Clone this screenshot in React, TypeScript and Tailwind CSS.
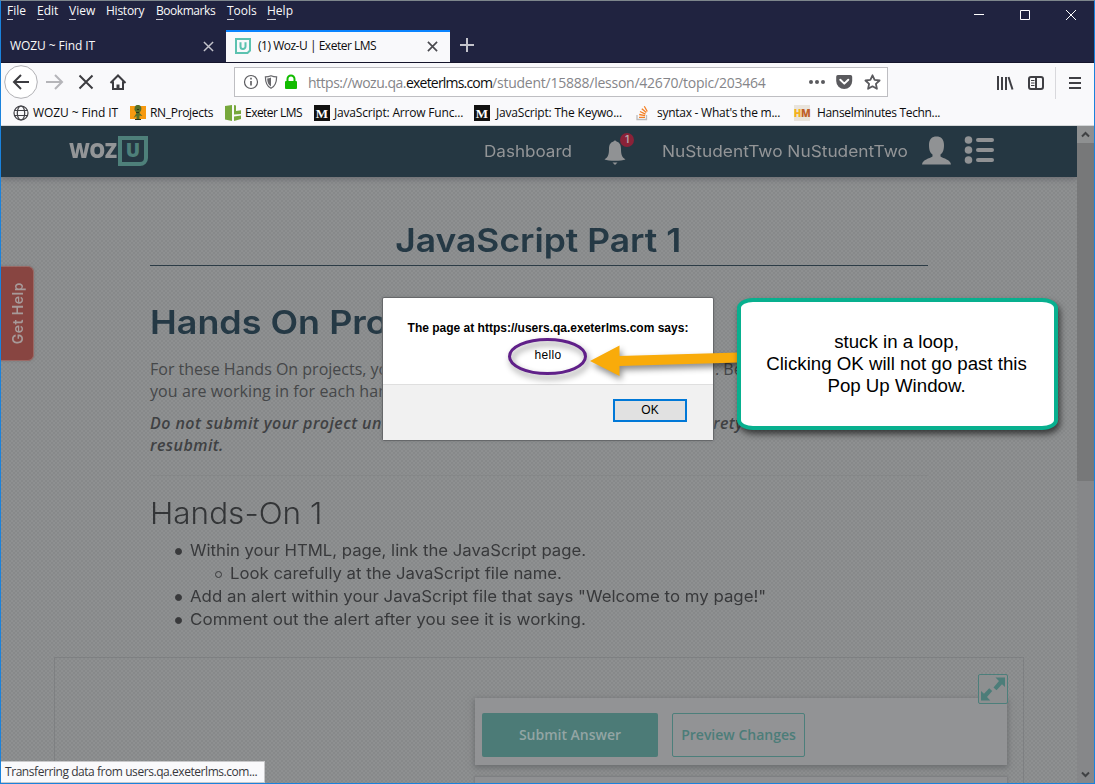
import type { ReactNode } from 'react';

const OS = "font-['Open_Sans',sans-serif]";
const ARIAL = "font-['Liberation_Sans',sans-serif]";

function MenuItem({ pre = '', k, post, cls }: { pre?: string; k: string; post: string; cls: string }) {
  return (
    <span className={`shrink-0 whitespace-nowrap ${cls}`}>
      {pre}
      <span className="border-b border-[#c9c9d2]">{k}</span>
      {post}
    </span>
  );
}

function Cross({ size, color, width = 1.5 }: { size: number; color: string; width?: number }) {
  return (
    <svg width={size} height={size} viewBox="0 0 12 12" fill="none" stroke={color} strokeWidth={width}>
      <path d="M1 1L11 11M11 1L1 11" />
    </svg>
  );
}

function Bookmark({ icon, label, cls }: { icon: ReactNode; label: string; cls: string }) {
  return (
    <div className={`flex shrink-0 items-center whitespace-nowrap ${cls}`}>
      {icon}
      <span>{label}</span>
    </div>
  );
}

function MediumIcon() {
  return (
    <span className="mr-1 flex h-4 w-4 shrink-0 items-center justify-center bg-[#111] font-['Liberation_Serif',serif] text-[13px] leading-none font-bold tracking-normal text-white">
      M
    </span>
  );
}

function MenuBar() {
  return (
    <div className="flex h-[29px] text-[12px] leading-[14px] text-[#f9f9fa]">
      <div className="flex h-[20px] items-center pl-[6px]">
        <MenuItem k="F" post="ile" cls="w-[30px]" />
        <MenuItem k="E" post="dit" cls="w-8" />
        <MenuItem k="V" post="iew" cls="w-[37px]" />
        <MenuItem pre="Hi" k="s" post="tory" cls="w-[50px] tracking-[-0.25px]" />
        <MenuItem k="B" post="ookmarks" cls="w-[71px] tracking-[-0.45px]" />
        <MenuItem k="T" post="ools" cls="w-10" />
        <MenuItem k="H" post="elp" cls="w-8" />
      </div>
      <svg className="ml-auto shrink-0" width="138" height="29" fill="none" stroke="#fff" strokeWidth="1">
        <path d="M18 13.5h10" />
        <path d="M64.5 9.5h9v9h-9z" />
        <path d="M110 9l10 10M120 9l-10 10" />
      </svg>
    </div>
  );
}

function TabBar() {
  return (
    <div className="flex h-8 text-[12px]">
      <div className="flex w-[225px] items-center justify-between pr-3 pl-[9px] text-[#f9f9fa]">
        <span className="tracking-[-0.08px]">WOZU ~ Find IT</span>
        <Cross size={11} color="#c3c3cb" width={1.6} />
      </div>
      <div className="flex w-[224px] items-center border-t-2 border-[#0a84ff] bg-[#f9f9fb] pr-3 pb-[2px] pl-[9px] text-[#0c0c0d]">
        <svg width="16" height="16" viewBox="0 0 16 16" fill="none" stroke="#5cc2b0">
          <path d="M1 1h14v11.5L12.500 15H1z" strokeWidth="2" />
          <path d="M5.500 4.200v4.300a2.500 2.500 0 0 0 5 0V4.200" strokeWidth="2" />
        </svg>
        <span className="ml-[7px] flex-1 tracking-[-0.48px]">(1) Woz-U | Exeter LMS</span>
        <Cross size={11} color="#4a4a4f" width={1.8} />
      </div>
      <div className="flex w-[34px] items-center justify-center pb-[2px]">
        <svg width="14" height="14" stroke="#c3c3cb" strokeWidth="2">
          <path d="M0 7h14M7 0v14" />
        </svg>
      </div>
    </div>
  );
}

function Toolbar() {
  return (
    <div className="flex h-[39px] items-center border-t border-[#15152c] bg-[#f9f9fb]">
      <svg className="ml-[2px] shrink-0" width="132" height="36" fill="none" stroke="#3c3c40" strokeWidth="2">
        <circle cx="18" cy="18" r="16.300" stroke="#b1b1b5" strokeWidth="1" fill="#fff" />
        <path d="M26 18H11.500M18 11l-7 7 7 7" />
        <path d="M43 18H58M52 11l7 7-7 7" stroke="#b5b5b9" />
        <path d="M76.500 11.500l13 13M89.500 11.500l-13 13" />
        <path d="M107.500 19l7.500-7.500 7.500 7.500M110 17.500V25h10v-7.500" />
        <path d="M115 25v-4.500" strokeWidth="3" />
      </svg>
      <div className="ml-[99px] flex h-[30px] w-[654px] shrink-0 items-center border border-[#bebec2] bg-white text-[14px] text-[#858589]">
        <svg className="ml-2 shrink-0" width="56" height="18" fill="none">
          <circle cx="8" cy="9" r="6.500" stroke="#5a5a5e" strokeWidth="1.200" />
          <path d="M8 8v4.500M8 4.800v1.700" stroke="#5a5a5e" strokeWidth="1.600" />
          <path d="M28 2.700c-2 .9-4 1.200-5.600 1.200C22.400 9 23.400 13 28 15.300c4.600-2.300 5.600-6.300 5.600-11.400C32 3.900 30 3.600 28 2.700z" stroke="#68686c" strokeWidth="1.200" />
          <path d="M28 4.500c-1.400.6-2.600.9-3.800 1C24.300 9 25 11.800 28 13.500z" fill="#68686c" />
          <rect x="42" y="8" width="12" height="8" rx="1" fill="#12bc00" />
          <path d="M44.500 9V6a3.500 3.500 0 0 1 7 0v3" stroke="#12bc00" strokeWidth="2" />
        </svg>
        <span className="ml-[9px] whitespace-nowrap">
          <span className="tracking-[-0.49px]">https://wozu.qa.</span>
          <span className="tracking-[-0.81px] text-[#0c0c0d]">exeterlms.com</span>
          <span className="tracking-[-0.24px]">/student/15888/lesson/42670/topic/203464</span>
        </span>
        <svg className="mr-[6px] ml-auto shrink-0" width="74" height="20" fill="#5a5a5e">
          <circle cx="4" cy="10" r="2" /><circle cx="10" cy="10" r="2" /><circle cx="16" cy="10" r="2" />
          <path d="M31 3h12.500a1.700 1.700 0 0 1 1.700 1.700V9a8 8 0 0 1-16 0V4.700A1.700 1.700 0 0 1 31 3z" />
          <path d="M33.300 7.800l4 3.800 4-3.800" fill="none" stroke="#fff" strokeWidth="2" strokeLinecap="round" strokeLinejoin="round" />
          <path d="M65.500 3.300l2.100 4.600 5 .6-3.700 3.400 1 4.900-4.400-2.500-4.400 2.500 1-4.900-3.700-3.400 5-.6z" fill="none" stroke="#5a5a5e" strokeWidth="1.800" strokeLinejoin="round" />
        </svg>
      </div>
      <svg className="mb-px ml-auto shrink-0" width="98" height="38" fill="none" stroke="#3f3f44" strokeWidth="2">
        <path d="M2 13v14M6 14v13M10 14v13" />
        <path d="M12.500 14l4 12.500" />
        <rect x="33" y="14" width="14" height="12" rx="2" />
        <path d="M40 14v12" />
        <path d="M35 17.500h3.500M35 20h3.500M35 22.500h3.500" strokeWidth="1" />
        <path d="M59.500 4v32" stroke="#d8d8dc" strokeWidth="1" />
        <path d="M73 15h12M73 20h12M73 25h12" />
      </svg>
    </div>
  );
}

function Bookmarks() {
  return (
    <div className="flex h-[25px] items-center border-b border-[#d5d8d9] bg-[#f9f9fb] pl-3 text-[12px] text-[#0c0c0d]">
      <Bookmark
        cls="w-[117px] tracking-[-0.08px]"
        label="WOZU ~ Find IT"
        icon={
          <svg className="mr-1" width="16" height="16" viewBox="0 0 16 16" fill="none" stroke="#3f3f44" strokeWidth="1.200">
            <circle cx="8" cy="8" r="7" />
            <ellipse cx="8" cy="8" rx="3.700" ry="7" />
            <path d="M1.500 5.500h13M1.500 10.500h13" />
          </svg>
        }
      />
      <Bookmark
        cls="w-[95px] tracking-[-0.32px]"
        label="RN_Projects"
        icon={
          <svg className="mr-1" width="16" height="16" viewBox="0 0 16 16">
            <path d="M0 1h16v13H0z" fill="#f79a10" />
            <path d="M8 0c3 0 4 2.500 3 5.500L9.500 8l3 3-3-.5v3.500H6.500v-3l-3 2 3-5-2-3C4.500 2 5 0 8 0z" fill="#55702b" />
            <path d="M7 4h2v1H7zM6 7h3v1H6zM5 14h6v1H5z" fill="#2c3418" />
          </svg>
        }
      />
      <Bookmark
        cls="w-[89px] tracking-[-0.53px]"
        label="Exeter LMS"
        icon={
          <svg className="mr-1" width="16" height="16" viewBox="0 0 16 16" fill="#77a83c">
            <path d="M0 1l7-1v16l-7-1.500z" />
            <path d="M9 0l2 .5V6l5-.8V9L9 9.500zM9 11.500l7-1V14l-7 2z" />
          </svg>
        }
      />
      <Bookmark cls="w-[160px] tracking-[-0.19px]" label="JavaScript: Arrow Func..." icon={<MediumIcon />} />
      <Bookmark cls="w-[161px] tracking-[-0.19px]" label="JavaScript: The Keywo..." icon={<span className="mr-[2px]"><MediumIcon /></span>} />
      <Bookmark
        cls="w-[159px] tracking-[-0.26px]"
        label="syntax - What's the m..."
        icon={
          <svg className="mr-[6px]" width="16" height="16" viewBox="0 0 16 16" fill="none">
            <path d="M2 10v4.500h9.500V10" stroke="#bcbbbb" strokeWidth="1.300" />
            <path d="M4 12.300h6M4.200 9.500l5.900 1.200M5 6.500l5.500 2.600M6.800 3.700l4.500 3.900M9.300 1.300l3 5.200" stroke="#f48024" strokeWidth="1.300" />
          </svg>
        }
      />
      <Bookmark
        cls="tracking-[-0.33px]"
        label="Hanselminutes Techn..."
        icon={
          <span className="mr-[7px] flex h-4 w-4 items-center justify-center bg-[#e9e4dc] text-[10px] leading-none font-extrabold tracking-[-0.5px]">
            <span className="text-[#f5b120]">H</span>
            <span className="text-[#c05f28]">M</span>
          </span>
        }
      />
    </div>
  );
}

function Navigation() {
  return (
    <div className="flex h-[51px] shrink-0 items-center bg-[#253742] pb-[2px] pl-[68px] font-[Inter,sans-serif] text-[16px] text-[#939597] shadow-[0_2px_6px_#6a6b70]">
      <div className="flex h-[30px] w-[415px] items-center">
        <span className={`${OS} w-[49px] text-[21px] leading-none font-extrabold tracking-[-0.6px]`}>
          <span className="inline-block origin-left scale-x-[0.96]">WOZ</span>
        </span>
        <div className={`${OS} flex h-[30px] w-[30px] items-center justify-center rounded-br-[8px] border-4 border-[#4e807a] text-[19px] leading-none font-extrabold text-[#4e807a]`}>
          U
        </div>
      </div>
      <span className="w-[119px]">
        <span className="inline-block origin-left scale-x-[1.067]">Dashboard</span>
      </span>
      <div className="relative h-[38px] w-[59px]">
        <svg className="absolute top-[8px] left-px" width="22" height="25" viewBox="0 0 22 25" fill="#909294">
          <path d="M9.500 1.500a1.600 1.600 0 0 1 3 0C16 2.500 17 5.500 17 9c0 6 1 8 4.500 10.500-4 1.800-17 1.800-21 0C4 17 5 15 5 9c0-3.500 1-6.500 4.500-7.500z" />
          <path d="M8.500 22.500h5L11 25z" />
        </svg>
        <span className="absolute top-px left-[17px] flex h-[14px] w-[14px] items-center justify-center rounded-full bg-[#8a2238] text-[10px] font-semibold text-[#b6a7ab]">1</span>
      </div>
      <span className="w-[260px] whitespace-nowrap">
        <span className="inline-block origin-left scale-x-[1.081]">NuStudentTwo NuStudentTwo</span>
      </span>
      <svg width="74" height="30" fill="#909294">
        <path d="M7 9c0-6 3-8.500 7.500-8.500S22 3 22 9c0 5-1 7.500-3.500 9.500v2c3 2 10 3 10.500 8H0c.5-5 7.500-6 10.500-8v-2C8 16.500 7 14 7 9z" />
        <circle cx="46.500" cy="4" r="3.800" /><circle cx="46.500" cy="14" r="3.800" /><circle cx="46.500" cy="24" r="3.800" />
        <rect x="54" y="2" width="18" height="4" rx="2" /><rect x="54" y="12" width="18" height="4" rx="2" /><rect x="54" y="22" width="18" height="4" rx="2" />
      </svg>
    </div>
  );
}

function Item({ children, cls, hollow = false }: { children: ReactNode; cls: string; hollow?: boolean }) {
  return (
    <li className="flex h-[23px] items-center whitespace-nowrap">
      <span className={`mt-[2px] mr-2 h-[7px] w-[7px] shrink-0 rounded-full border border-[#38393b] ${hollow ? '' : 'bg-[#38393b]'}`} />
      <span className={`inline-block origin-left ${cls}`}>{children}</span>
    </li>
  );
}

function Lesson() {
  return (
    <div className="ml-[149px] w-[778px] shrink-0">
      <h1 className="mt-[39px] flex h-[50px] items-center justify-center border-b border-[#2c3c46] pr-[2px] font-[Inter,sans-serif] text-[33px] font-semibold text-[#253945]">
        <span className="scale-x-[1.073]">JavaScript Part 1</span>
      </h1>
      <h2 className="mt-[34px] h-[44px] font-[Inter,sans-serif] text-[33px] leading-[45px] font-semibold whitespace-nowrap text-[#253945]">
        <span className="inline-block origin-left scale-x-[1.088]">Hands On Pro</span>
      </h2>
      <div className={`${OS} mt-[14px] text-[16px] leading-[22px] whitespace-nowrap text-[#454749]`}>
        <div className="flex">
          <span className="w-[565px]">For these Hands On projects, yo</span>
          <span>. Be</span>
        </div>
        <div className="tracking-[0.08px]">you are working in for each han</div>
      </div>
      <div className={`${OS} mt-[10px] text-[16px] leading-[22px] font-semibold tracking-[0.44px] whitespace-nowrap text-[#3f4143] italic`}>
        <div className="flex">
          <span className="w-[563px]">Do not submit your project un</span>
          <span>rety</span>
        </div>
        <div>resubmit.</div>
      </div>
      <div className="mt-[19px] border-t border-[#858788]" />
      <h3 className="mt-[16px] h-[42px] font-[Inter,sans-serif] text-[30px] leading-[42px] font-light text-[#333537]">
        <span className="inline-block origin-left scale-x-[1.05]">Hands-On 1</span>
      </h3>
      <ul className="mt-[5px] pl-[25px] font-[Inter,sans-serif] text-[16px] leading-[21px] text-[#38393b]">
        <Item cls="scale-x-[1.045]">Within your HTML, page, link the JavaScript page.</Item>
        <ul className="pl-10">
          <Item hollow cls="scale-x-[1.045]">Look carefully at the JavaScript file name.</Item>
        </ul>
        <Item cls="scale-x-[1.052]">Add an alert within your JavaScript file that says "Welcome to my page!"</Item>
        <Item cls="scale-x-[1.064]">Comment out the alert after you see it is working.</Item>
      </ul>
    </div>
  );
}

function Answer() {
  return (
    <div className="relative mt-[26px] ml-[53px] h-[140px] w-[970px] shrink-0 border border-[#7e8082]">
      <div className={`${OS} mt-10 ml-[420px] flex h-[67px] w-[532px] gap-[14px] bg-[#929395] pt-[15px] pl-[7px] text-[14px] font-semibold shadow-[0_2px_6px_1px_#6c6e70]`}>
        <div className="flex h-11 w-[176px] items-center justify-center rounded-[2px] bg-[#4c7b77] pb-[2px] text-[#93a5a4]">Submit Answer</div>
        <div className="flex h-11 w-[133px] items-center justify-center rounded-[2px] border border-[#4c7f7b] pb-[2px] text-[#4c7d79]">Preview Changes</div>
      </div>
      <div className="mt-3 ml-[420px] h-10 w-[532px] bg-[#8f9092] shadow-[0_0_2px_1px_#7a7c7e]" />
      <div className="absolute top-4 left-[923px] flex h-[30px] w-[30px] items-center justify-center rounded-[2px] border border-[#4c7f7b] bg-[#8d8f90]">
        <svg width="26" height="26" viewBox="0 0 26 26" fill="#4c7d79">
          <path d="M15.500 1.500H25V11l-3-2.800-5.500 6-3-2.800 5.500-6.300zM1 24.500V15l3 2.800 5.200-5.600 3 2.800-5.200 6 3.300 3.500z" />
        </svg>
      </div>
    </div>
  );
}

function Scrollbar() {
  return (
    <div className="flex w-[17px] shrink-0 flex-col bg-[#868789]">
      <div className="flex h-[17px] items-center justify-center bg-[#8e9091]">
        <svg width="9" height="7" fill="none" stroke="#404244" strokeWidth="2"><path d="M1 5.500l3.500-3.500L8 5.500" /></svg>
      </div>
      <div className="h-[338px] bg-[#777879]" />
      <div className="mt-auto flex h-[17px] items-center justify-center">
        <svg width="9" height="7" fill="none" stroke="#404244" strokeWidth="2"><path d="M1 1.500l3.500 3.500L8 1.500" /></svg>
      </div>
    </div>
  );
}

function AlertDialog() {
  return (
    <div className={`${ARIAL} absolute top-[296px] left-[381px] flex h-[144px] w-[332px] flex-col rounded-[2px] border border-[#66686a] bg-white text-[12px] text-black shadow-[0_0_3px_#77797b]`}>
      <div className="mt-[23px] text-center leading-[14px] font-bold">The page at https://users.qa.exeterlms.com says:</div>
      <div className="mt-[13px] text-center leading-[14px] tracking-[0.3px]">hello</div>
      <div className="mt-auto flex h-[56px] justify-end border-t border-[#dfdfdf] bg-[#f1f1f1] pt-[14px] pr-[26px]">
        <button className="flex h-[23px] w-[74px] items-center justify-center border-2 border-[#0078d7] bg-[#e1e1e1] pb-px text-[12px]">OK</button>
      </div>
    </div>
  );
}

function Annotations() {
  return (
    <>
      <svg className="absolute top-[330px] left-[500px]" width="245" height="60" viewBox="500 330 245 60">
        <g className="drop-shadow-[2px_4px_3px_rgba(0,0,0,0.45)]">
          <ellipse cx="546.500" cy="355.500" rx="38" ry="17" fill="none" stroke="#602089" strokeWidth="3" />
        </g>
        <g className="drop-shadow-[2px_4px_3px_rgba(0,0,0,0.45)]">
          <path d="M589 360L618.500 344.500V355L738 351.500V361.500L618.500 365V375z" fill="#f9ab0a" />
        </g>
      </svg>
      <div className={`${ARIAL} absolute top-[297px] left-[736px] flex h-[132px] w-[321px] flex-col items-center rounded-[16px/10px] border-4 border-[#08b08f] bg-white pt-[29px] pr-[2px] text-[18.7px] leading-[22px] whitespace-nowrap text-black shadow-[2px_4px_6px_rgba(0,0,0,0.6)]`}>
        <div>stuck in a loop,</div>
        <div>Clicking OK will not go past this</div>
        <div>Pop Up Window.</div>
      </div>
    </>
  );
}

export default function App() {
  return (
    <div className={`${OS} relative flex h-[784px] w-[1095px] flex-col overflow-hidden border border-[#1a82dc] border-t-[#7d868c] bg-[#202340]`}>
      <MenuBar />
      <TabBar />
      <Toolbar />
      <Bookmarks />
      <div className="flex h-[657px]">
        <main className="flex w-[1076px] flex-col overflow-hidden bg-[#8c8e8f] bg-[repeating-conic-gradient(#00000009_0_25%,#ffffff05_0_50%)] bg-[length:4px_4px]">
          <Navigation />
          <Lesson />
          <Answer />
        </main>
        <Scrollbar />
      </div>
      <div className="absolute top-[265px] left-0 flex h-[95px] w-[33px] items-center justify-center rounded-r-[6px] border border-l-0 border-[#9a6a66] bg-[#884541] shadow-[0_0_3px_#777]">
        <span className="rotate-180 font-[Inter,sans-serif] text-[14px] font-semibold tracking-[0.5px] text-[#a79a99] [writing-mode:vertical-rl]">Get Help</span>
      </div>
      <div className="absolute bottom-0 left-0 flex h-[22px] w-[264px] items-center border border-l-0 border-[#c8c8ca] bg-[#f9f9fb] pl-1 text-[12px] tracking-[-0.44px] whitespace-nowrap text-[#38383d]">
        Transferring data from users.qa.exeterlms.com...
      </div>
      <AlertDialog />
      <Annotations />
    </div>
  );
}
